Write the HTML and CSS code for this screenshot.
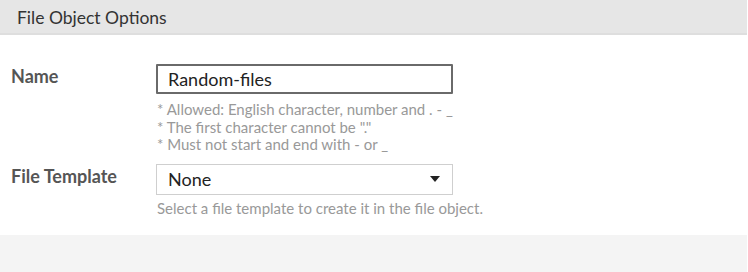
FILE: index.html
```html
<!DOCTYPE html>
<html lang="en">
<head>
    <meta charset="UTF-8">
    <meta name="viewport" content="width=device-width, initial-scale=1.0">
    <title>File Object Options</title>
    <link rel="stylesheet" href="styles.css">
</head>
<body>
    <div class="panel">
        <div class="panel-header">File Object Options</div>

        <div class="panel-body">
            <div class="form-row row-name">
                <label class="form-label" for="name">Name</label>
                <div class="form-field">
                    <input type="text" id="name" class="text-input" value="Random-files">
                    <div class="hint">
                        <div>* Allowed: English character, number and . - _</div>
                        <div>* The first character cannot be "."</div>
                        <div>* Must not start and end with - or _</div>
                    </div>
                </div>
            </div>

            <div class="form-row row-template">
                <label class="form-label" for="template">File Template</label>
                <div class="form-field">
                    <div class="select-box" id="template">
                        <span>None</span>
                        <span class="caret"></span>
                    </div>
                    <div class="hint hint-single">Select a file template to create it in the file object.</div>
                </div>
            </div>
        </div>

        <div class="panel-footer"></div>
    </div>
</body>
</html>
```

FILE: styles.css
```css
body {
    margin: 0;
    background-color: #fff;
    font-family: Lato, "Open Sans", sans-serif;
    color: #333;
}

.panel {
    width: 747px;
}

.panel-header {
    height: 33px;
    line-height: 35px;
    padding-left: 17px;
    font-size: 17.5px;
    color: #333;
    background-color: #e6e6e6;
    border-bottom: 2px solid #dedede;
}

.panel-body {
    padding: 29px 0 0 11px;
    height: 200px;
    box-sizing: border-box;
}

.form-row {
    display: flex;
}

.row-template {
    margin-top: 10px;
}

.form-label {
    width: 145px;
    font-size: 18px;
    font-weight: bold;
    color: #555;
    padding-top: 1px;
}

.text-input {
    box-sizing: border-box;
    width: 297px;
    height: 30px;
    margin: 0;
    padding: 0 10px;
    font-family: Lato, sans-serif;
    font-size: 18px;
    color: #222;
    border: 2px solid #6a6a6a;
    border-radius: 1px;
    outline: none;
}

.select-box {
    box-sizing: border-box;
    width: 297px;
    height: 31px;
    padding: 0 11px;
    display: flex;
    align-items: center;
    justify-content: space-between;
    font-size: 18px;
    color: #222;
    border: 1px solid #cfcfcf;
}

.caret {
    width: 0;
    height: 0;
    border-left: 5px solid transparent;
    border-right: 5px solid transparent;
    border-top: 6px solid #222;
    margin-right: 1px;
}

.hint {
    margin-top: 7px;
    padding-left: 1px;
    font-size: 15px;
    line-height: 17.5px;
    color: #999;
}

.hint-single {
    margin-top: 5px;
}

.panel-footer {
    height: 37px;
    background-color: #f4f4f4;
}
```
